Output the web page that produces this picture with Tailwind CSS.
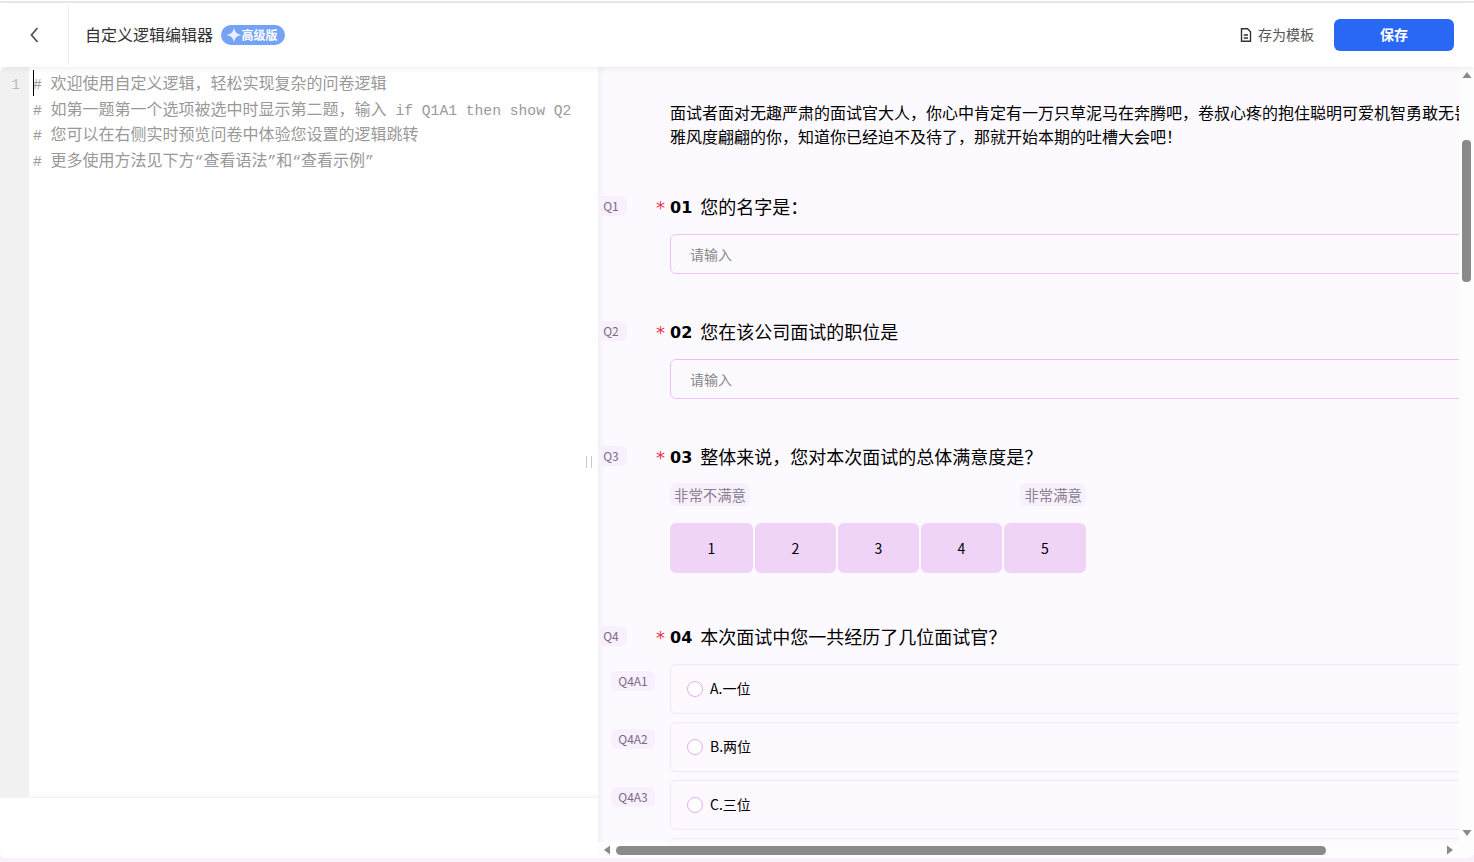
<!DOCTYPE html>
<html lang="zh">
<head>
<meta charset="utf-8">
<script src="https://cdn.jsdelivr.net/npm/@tailwindcss/browser@4"></script>
</head>
<body class="h-[862px] w-[1474px] overflow-hidden bg-[#f8f0fb] font-['Noto_Sans_CJK_SC','Noto_Sans',sans-serif]">
<div class="flex h-[858px] flex-col overflow-hidden rounded-b-md bg-white">
  <div class="h-[3px] shrink-0 border-b-2 border-[#e9e9e9] bg-white"></div>
  <header class="relative z-10 flex h-[64px] shrink-0 items-center bg-white pr-5 shadow-[0_2px_6px_rgba(0,0,0,0.06)]">
    <div class="flex h-[60px] w-[69px] items-center justify-center border-r border-[#eeeeee] pl-[2px]">
      <svg class="h-4 w-4 text-[#555555]" viewBox="0 0 16 16" fill="none" stroke="currentColor" stroke-width="1.8"><path d="M10.5 1 L4.5 8 L10.5 15"/></svg>
    </div>
    <h1 class="relative -top-px ml-4 text-[16px] leading-none font-normal text-[#333333]">自定义逻辑编辑器</h1>
    <span class="ml-2 flex h-5 w-16 items-center justify-center rounded-full bg-[#74a2f5] text-[12px] font-bold text-white"><svg class="-ml-[3px] h-4 w-4" viewBox="0 0 16 16" fill="#e8f0ff"><path d="M8 0.5 C9 5.4 10.6 7 15.5 8 C10.6 9 9 10.6 8 15.5 C7 10.6 5.4 9 0.5 8 C5.4 7 7 5.4 8 0.5Z"/></svg>高级版</span>
    <div class="ml-auto flex items-center">
      <svg class="h-4 w-4 text-[#333333]" viewBox="0 0 16 16" fill="none" stroke="currentColor" stroke-width="1.4"><path d="M3.5 1.8 H9.5 L12.5 4.8 V14.2 H3.5 Z"/><path d="M5.8 8 H10 M5.8 11 H10"/></svg>
      <span class="relative -top-px ml-1 text-[14px] text-[#555555]">存为模板</span>
      <button class="ml-5 h-8 w-[120px] rounded-md bg-[#2968f5] pb-[2px] text-[14px] font-bold text-white">保存</button>
    </div>
  </header>
  <main class="flex min-h-0 flex-1">
    <section class="relative flex w-[598px] shrink-0 flex-col">
      <span class="absolute top-[389px] right-[6px] h-[12px] w-[6px] border-x border-[#c8c8c8]"></span>
      <div class="flex min-h-0 flex-1 bg-white shadow-[inset_0_-6px_6px_-6px_rgba(0,0,0,0.06)]">
        <div class="w-[29px] shrink-0 rounded-tl-md bg-[#f1f1f1] pt-[6px] pr-[9px] text-right font-['Liberation_Mono',monospace] text-[14px] leading-[25px] text-[#b9b9b9]">1</div>
        <div class="relative flex-1 pt-[3px] pl-1 text-[16px] leading-[25.6px] text-[#999999]">
          <div class="absolute top-[3px] left-1 h-[26px] w-px bg-black"></div>
          <p class="h-[25.6px] whitespace-pre"><span class="font-['Liberation_Mono',monospace] text-[14.67px]"># </span>欢迎使用自定义逻辑，轻松实现复杂的问卷逻辑</p>
          <p class="h-[25.6px] whitespace-pre"><span class="font-['Liberation_Mono',monospace] text-[14.67px]"># </span>如第一题第一个选项被选中时显示第二题，输入<span class="font-['Liberation_Mono',monospace] text-[14.67px]"> if Q1A1 then show Q2</span></p>
          <p class="h-[25.6px] whitespace-pre"><span class="font-['Liberation_Mono',monospace] text-[14.67px]"># </span>您可以在右侧实时预览问卷中体验您设置的逻辑跳转</p>
          <p class="h-[25.6px] whitespace-pre"><span class="font-['Liberation_Mono',monospace] text-[14.67px]"># </span>更多使用方法见下方<span class="font-['Liberation_Mono',monospace] text-[14.67px]">“</span>查看语法<span class="font-['Liberation_Mono',monospace] text-[14.67px]">”</span>和<span class="font-['Liberation_Mono',monospace] text-[14.67px]">“</span>查看示例<span class="font-['Liberation_Mono',monospace] text-[14.67px]">”</span></p>
        </div>
      </div>
      <div class="h-[61px] shrink-0 border-t border-[#f3f3f3] bg-white"></div>
    </section>
    <section class="relative min-w-0 flex-1 overflow-hidden bg-[#fdfaff] shadow-[inset_6px_0_6px_-4px_rgba(0,0,0,0.06)]">
      <div class="h-[775px] w-[861px] overflow-hidden pt-[33px]">
        <div class="w-[900px] pl-[72px]">
          <p class="text-[16px] leading-[24px] whitespace-nowrap text-black">面试者面对无趣严肃的面试官大人，你心中肯定有一万只草泥马在奔腾吧，卷叔心疼的抱住聪明可爱机智勇敢无畏</p>
          <p class="text-[16px] leading-[24px] whitespace-nowrap text-black">雅风度翩翩的你，知道你已经迫不及待了，那就开始本期的吐槽大会吧！</p>

          <div class="relative mt-[45px]">
            <span class="absolute top-[3px] -left-[72px] flex h-5 w-[29px] items-center justify-center rounded-r-md bg-[#f8f0fc] pr-[3px] text-[12px] text-[#7d6a85]">Q1</span>
            <span class="absolute top-[2px] -left-[14px] font-['DejaVu_Sans',sans-serif] text-[18px] leading-[26px] text-[#e8344e]">*</span>
            <h2 class="flex h-[26px] items-center text-[18px] text-black"><b class="relative top-[2px] mr-2 font-['DejaVu_Sans',sans-serif] text-[16px]">01</b>您的名字是：</h2>
            <div class="mt-[15px] flex h-10 w-[830px] items-center rounded-md border border-[#eec0f7] pl-[19px] text-[14px] text-[#888888]">请输入</div>
          </div>

          <div class="relative mt-[44px]">
            <span class="absolute top-[3px] -left-[72px] flex h-5 w-[29px] items-center justify-center rounded-r-md bg-[#f8f0fc] pr-[3px] text-[12px] text-[#7d6a85]">Q2</span>
            <span class="absolute top-[2px] -left-[14px] font-['DejaVu_Sans',sans-serif] text-[18px] leading-[26px] text-[#e8344e]">*</span>
            <h2 class="flex h-[26px] items-center text-[18px] text-black"><b class="relative top-[2px] mr-2 font-['DejaVu_Sans',sans-serif] text-[16px]">02</b>您在该公司面试的职位是</h2>
            <div class="mt-[15px] flex h-10 w-[830px] items-center rounded-md border border-[#eec0f7] pl-[19px] text-[14px] text-[#888888]">请输入</div>
          </div>

          <div class="relative mt-[44px]">
            <span class="absolute top-[3px] -left-[72px] flex h-5 w-[29px] items-center justify-center rounded-r-md bg-[#f8f0fc] pr-[3px] text-[12px] text-[#7d6a85]">Q3</span>
            <span class="absolute top-[2px] -left-[14px] font-['DejaVu_Sans',sans-serif] text-[18px] leading-[26px] text-[#e8344e]">*</span>
            <h2 class="flex h-[26px] items-center text-[18px] text-black"><b class="relative top-[2px] mr-2 font-['DejaVu_Sans',sans-serif] text-[16px]">03</b>整体来说，您对本次面试的总体满意度是？</h2>
            <div class="mt-[14px] flex w-[416px] justify-between text-[14.4px] text-[#8a7f90]">
              <span class="flex h-[23px] items-center rounded-md bg-[#f8f0fc] px-1">非常不满意</span>
              <span class="flex h-[23px] items-center rounded-md bg-[#f8f0fc] px-1">非常满意</span>
            </div>
            <div class="mt-[17px] grid w-[416px] grid-cols-[83px_81px_81px_81px_82px] gap-[2px] text-[14px] text-black">
              <span class="flex h-[50px] items-center justify-center rounded-md bg-[#efd4f8]">1</span>
              <span class="flex h-[50px] items-center justify-center rounded-md bg-[#efd4f8]">2</span>
              <span class="flex h-[50px] items-center justify-center rounded-md bg-[#efd4f8]">3</span>
              <span class="flex h-[50px] items-center justify-center rounded-md bg-[#efd4f8]">4</span>
              <span class="flex h-[50px] items-center justify-center rounded-md bg-[#efd4f8]">5</span>
            </div>
          </div>

          <div class="relative mt-[50px]">
            <span class="absolute top-[3px] -left-[72px] flex h-5 w-[29px] items-center justify-center rounded-r-md bg-[#f8f0fc] pr-[3px] text-[12px] text-[#7d6a85]">Q4</span>
            <span class="absolute top-[2px] -left-[14px] font-['DejaVu_Sans',sans-serif] text-[18px] leading-[26px] text-[#e8344e]">*</span>
            <h2 class="flex h-[26px] items-center text-[18px] text-black"><b class="relative top-[2px] mr-2 font-['DejaVu_Sans',sans-serif] text-[16px]">04</b>本次面试中您一共经历了几位面试官？</h2>
            <div class="mt-[15px] flex w-[830px] flex-col gap-2 text-[14px] text-black">
              <div class="relative flex h-[50px] items-center rounded-md border border-[#f5e4fb] bg-[#fdf9ff] pl-[16px]">
                <span class="absolute top-[6px] -left-[60px] flex h-5 w-11 items-center justify-center rounded-md bg-[#f8f0fc] text-[12px] text-[#7d6a85]">Q4A1</span>
                <span class="mr-[7px] h-4 w-4 rounded-full border border-[#e7acf5] bg-white"></span><span class="relative -top-px">A.一位</span>
              </div>
              <div class="relative flex h-[50px] items-center rounded-md border border-[#f5e4fb] bg-[#fdf9ff] pl-[16px]">
                <span class="absolute top-[6px] -left-[60px] flex h-5 w-11 items-center justify-center rounded-md bg-[#f8f0fc] text-[12px] text-[#7d6a85]">Q4A2</span>
                <span class="mr-[7px] h-4 w-4 rounded-full border border-[#e7acf5] bg-white"></span><span class="relative -top-px">B.两位</span>
              </div>
              <div class="relative flex h-[50px] items-center rounded-md border border-[#f5e4fb] bg-[#fdf9ff] pl-[16px]">
                <span class="absolute top-[6px] -left-[60px] flex h-5 w-11 items-center justify-center rounded-md bg-[#f8f0fc] text-[12px] text-[#7d6a85]">Q4A3</span>
                <span class="mr-[7px] h-4 w-4 rounded-full border border-[#e7acf5] bg-white"></span><span class="relative -top-px">C.三位</span>
              </div>
              <div class="h-[50px] rounded-md border border-[#f5e4fb] bg-[#fdf9ff]"></div>
            </div>
          </div>
        </div>
      </div>
      <!-- vertical scrollbar -->
      <div class="absolute top-0 right-0 bottom-0 flex w-[15px] flex-col items-center bg-[#fdfdfd]">
        <svg class="mt-1 h-2 w-2.5" viewBox="0 0 10 8" fill="#8a8a8a"><path d="M5 1 L9.5 7 H0.5 Z"/></svg>
        <div class="mt-[61px] h-[142px] w-[9px] rounded bg-[#8a8a8a]"></div>
      </div>
      <svg class="absolute right-[2px] bottom-[21px] h-2 w-2.5" viewBox="0 0 10 8" fill="#8a8a8a"><path d="M5 7 L9.5 1 H0.5 Z"/></svg>
      <!-- horizontal scrollbar -->
      <div class="absolute right-0 bottom-0 left-0 flex h-[16px] items-center bg-[#fdfdfd] pl-[5px]">
        <svg class="h-2.5 w-2" viewBox="0 0 8 10" fill="#8a8a8a"><path d="M1 5 L7 0.5 V9.5 Z"/></svg>
        <div class="ml-[5px] h-[9px] w-[710px] rounded-full bg-[#8a8a8a]"></div>
        <svg class="ml-[120px] h-2.5 w-2" viewBox="0 0 8 10" fill="#8a8a8a"><path d="M7 5 L1 0.5 V9.5 Z"/></svg>
      </div>
    </section>
  </main>
</div>
</body>
</html>
